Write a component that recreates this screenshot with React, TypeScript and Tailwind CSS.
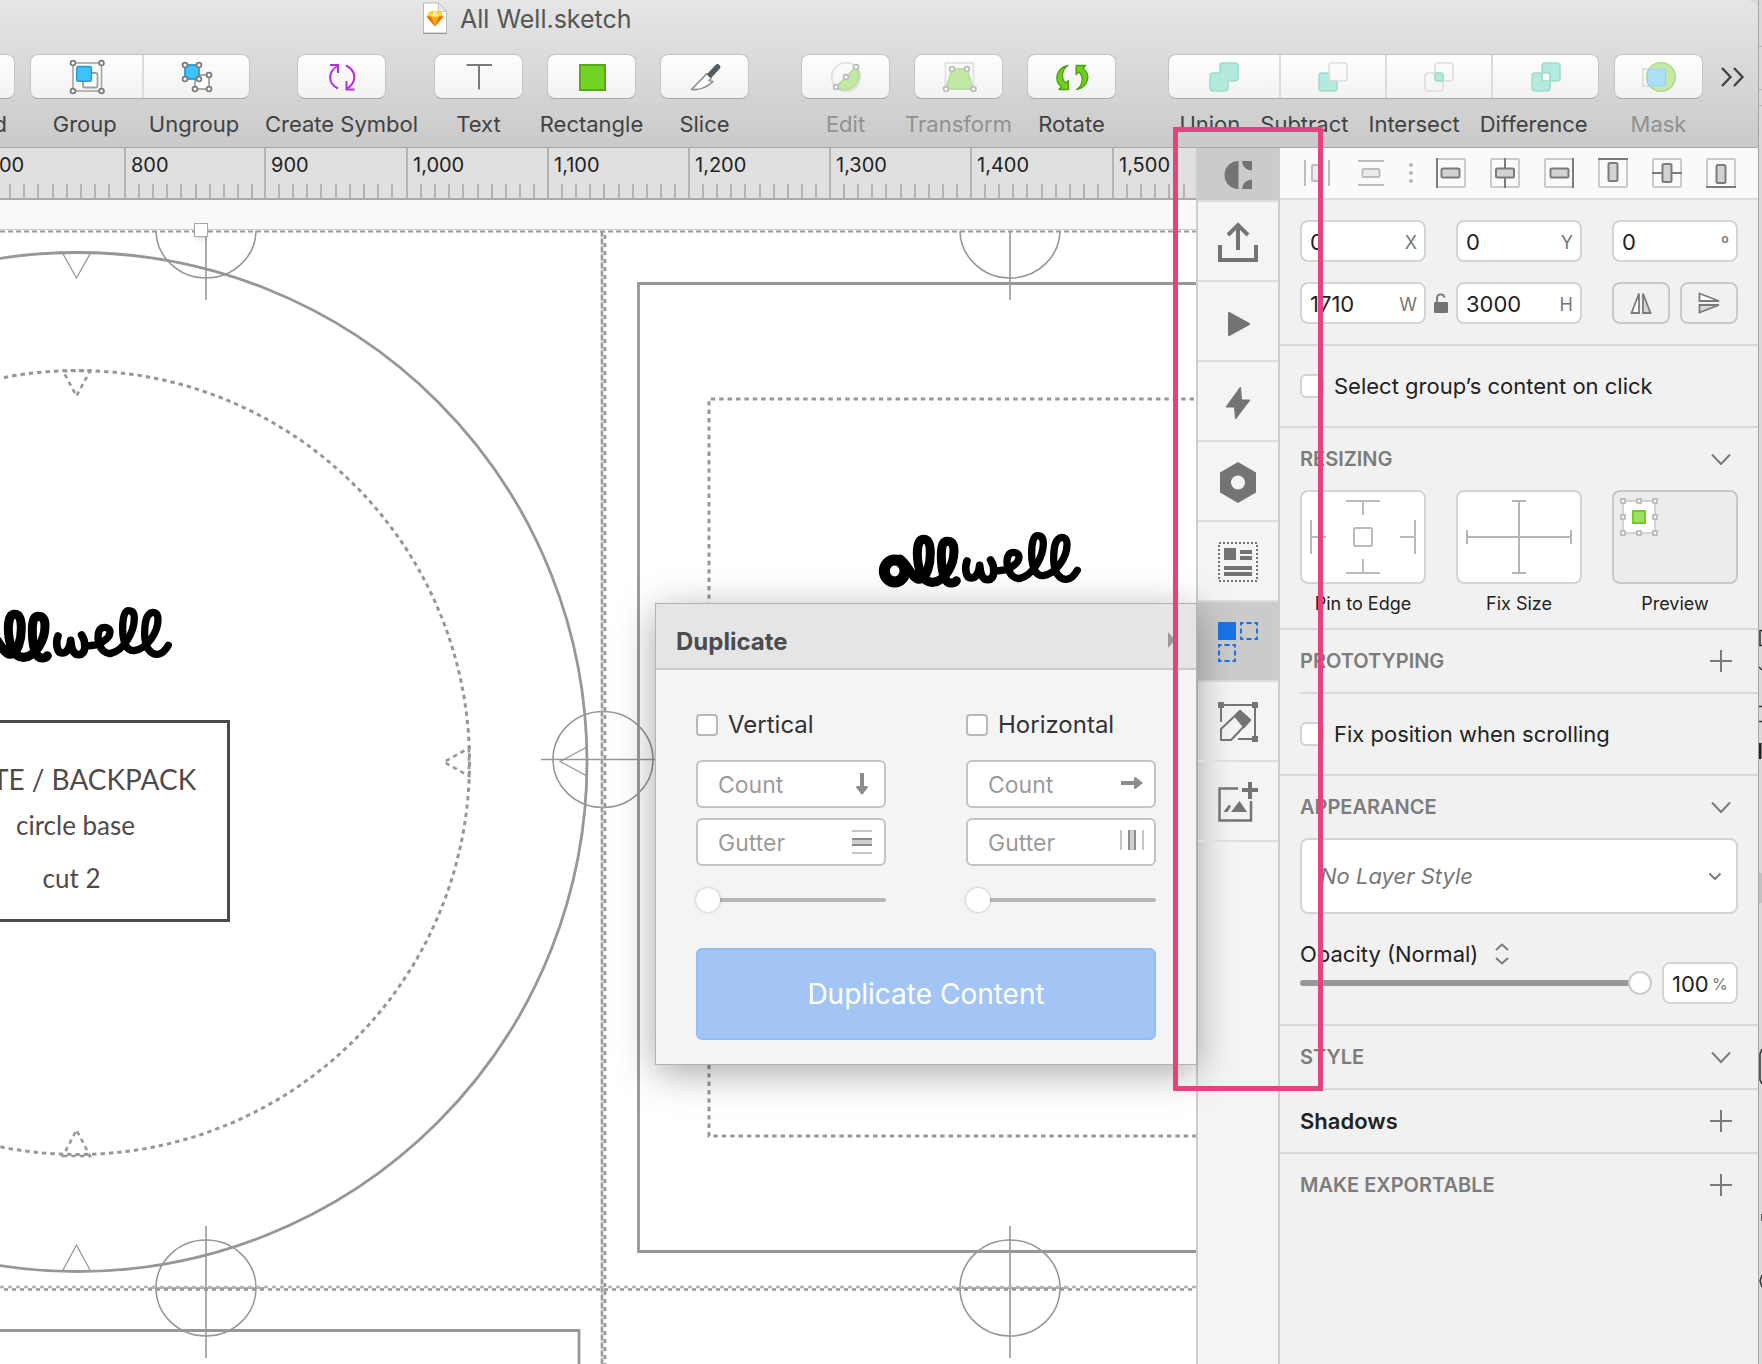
import type { ReactNode } from "react";

const inputBox =
  "flex h-[42px] items-center rounded-lg border-2 border-[#d4d4d4] bg-white pt-0.5 pr-[7px] pl-2";

function Art({ box, w = 40, h = 40, children }: { box: string; w?: number; h?: number; children: ReactNode }) {
  return (
    <svg viewBox={box} width={w} height={h} fill="none" aria-hidden="true" className="shrink-0">
      {children}
    </svg>
  );
}

function Nodes({ at, stroke = "#7c7c7c" }: { at: number[][]; stroke?: string }) {
  return (
    <>
      {at.map(([x, y]) => (
        <circle key={`${x}-${y}`} cx={x} cy={y} r="2.4" fill="#fff" stroke={stroke} strokeWidth="1.8" />
      ))}
    </>
  );
}

/* ---------- toolbar ---------- */

const toolFace =
  "flex h-[45px] items-center justify-center rounded-lg border border-[#c4c4c4] border-b-[#a9a9a9] bg-linear-to-b from-[#fefefe] to-[#f2f2f2]";

function Tool({ label, muted = false, children }: { label: string; muted?: boolean; children: ReactNode }) {
  return (
    <button type="button" className="flex w-[89px] shrink-0 flex-col items-center">
      <span className={`w-full ${toolFace}`}>{children}</span>
      <span className={`mt-[13px] text-[22px] leading-6 whitespace-nowrap ${muted ? "text-[#919191]" : "text-[#424242]"}`}>
        {label}
      </span>
    </button>
  );
}

function Segments({ items, labelClass }: { items: { label: string; width: string; icon: ReactNode }[]; labelClass: string }) {
  return (
    <div className="flex shrink-0 flex-col">
      <div className={toolFace}>
        {items.map((it, i) => (
          <button
            key={it.label}
            type="button"
            aria-label={it.label}
            className={`flex h-full items-center justify-center ${it.width} ${i > 0 ? "border-l-2 border-[#dcdcdc]" : ""}`}
          >
            {it.icon}
          </button>
        ))}
      </div>
      <div className={`mt-[13px] flex justify-center text-[22px] leading-6 whitespace-nowrap text-[#424242] ${labelClass}`}>
        {items.map((it) => (
          <span key={it.label}>{it.label}</span>
        ))}
      </div>
    </div>
  );
}

const mint = "#b4eade";
const mintEdge = "#9fdccd";

function Toolbar() {
  return (
    <div className="flex text-[#424242]">
      <div className="-ml-[97px] flex w-28 shrink-0 flex-col">
        <button type="button" aria-label="Forward" className={toolFace} />
        <span className="mt-[13px] pr-2 text-right text-[22px] leading-6">Forward</span>
      </div>

      <div className="ml-[15px] flex">
        <Segments
          labelClass="gap-8 pl-3"
          items={[
            {
              label: "Group",
              width: "w-[111px]",
              icon: (
                <Art box="66 57 40 40">
                  <rect x="72" y="63" width="28.5" height="28" stroke="#a5a5a5" strokeWidth="1.6" />
                  <rect x="82" y="73" width="14.5" height="14.5" rx="2" fill="#fff" stroke="#a0a0a0" strokeWidth="1.8" />
                  <rect x="75.8" y="66.6" width="14.6" height="14.6" rx="1.5" fill="#3fc3fd" stroke="#2c9ccc" strokeWidth="1.6" />
                  <Nodes at={[[72, 63], [100.5, 63], [72, 91], [100.5, 91]]} />
                </Art>
              ),
            },
            {
              label: "Ungroup",
              width: "w-[107px]",
              icon: (
                <Art box="176 57 40 40">
                  <rect x="194" y="75" width="14" height="14" fill="#fff" stroke="#a0a0a0" strokeWidth="1.8" />
                  <rect x="184" y="65" width="14" height="14" fill="#3fc3fd" stroke="#2c9ccc" strokeWidth="1.8" />
                  <Nodes at={[[184, 65], [198, 65], [184, 79], [198, 79], [208, 75], [194, 89], [208, 89]]} />
                </Art>
              ),
            },
          ]}
        />
      </div>

      <div className="ml-[47px] flex">
        <Tool label="Create Symbol">
          <Art box="322 56 40 40">
            <g stroke="#b52fdc" strokeWidth="2">
              <path d="M338 87.500C327.500 82 327.500 71 338 64.500" />
              <path d="M330 64h8v8" />
              <path d="M346 64.500C356.500 70 357.500 81 346.500 88" />
              <path d="M354.500 88.500H346.500V80" />
            </g>
          </Art>
        </Tool>
      </div>

      <div className="ml-12 flex gap-6">
        <Tool label="Text">
          <Art box="459 56 40 40">
            <path d="M466.500 64H492M479 64V88.500" stroke="#7b7b7b" strokeWidth="2" />
          </Art>
        </Tool>
        <Tool label="Rectangle">
          <Art box="572 56 40 40">
            <rect x="580" y="64" width="25" height="25" fill="#73d325" stroke="#57a91a" strokeWidth="2" />
          </Art>
        </Tool>
        <Tool label="Slice">
          <Art box="685 56 40 40">
            <path d="M691.500 88.500L707 72.500 711.500 77 709 79.500 713 80.500C706 87 700 89.500 691.500 88.500Z" fill="#fff" stroke="#8d8d8d" strokeWidth="1.600" strokeLinejoin="round" />
            <path d="M717.500 66L710.500 73.500" stroke="#535c61" strokeWidth="5.500" strokeLinecap="round" />
          </Art>
        </Tool>
      </div>

      <div className="ml-[52px] flex gap-6">
        <Tool label="Edit" muted>
          <Art box="826 56 40 40">
            <circle cx="846" cy="76" r="14.300" stroke="#dedede" strokeWidth="1.600" />
            <path d="M856 66A14.300 14.300 0 0 1 836 86Z" fill="#c2e9a4" stroke="#b4db98" strokeWidth="1.500" />
            <Nodes at={[[856, 66], [846, 76], [836, 86]]} stroke="#bcbcbc" />
          </Art>
        </Tool>
        <Tool label="Transform" muted>
          <Art box="939 56 40 40">
            <rect x="945.500" y="62" width="28" height="26" stroke="#dedede" strokeWidth="1.600" />
            <path d="M952 68H967L973 88H946Z" fill="#c2e9a4" stroke="#b4db98" strokeWidth="1.600" />
            <Nodes at={[[952, 68], [967, 68], [946, 88], [973.5, 88]]} stroke="#bcbcbc" />
          </Art>
        </Tool>
        <Tool label="Rotate">
          <Art box="1054 56 40 40">
            <g fill="#6fd021" stroke="#48a012" strokeWidth="1.300" strokeLinejoin="round">
              <path d="M1070 64.500C1058 67 1055.500 80 1063.500 85.500L1061 88.500H1070.500V79.500L1067.500 82C1062.500 77 1064 68 1070 64.500Z" />
              <path transform="rotate(180 1074.300 76.500)" d="M1070 64.500C1058 67 1055.500 80 1063.500 85.500L1061 88.500H1070.500V79.500L1067.500 82C1062.500 77 1064 68 1070 64.500Z" />
            </g>
          </Art>
        </Tool>
      </div>

      <div className="ml-[52px] flex">
        <Segments
          labelClass="gap-5"
          items={[
            {
              label: "Union",
              width: "w-[110px]",
              icon: (
                <Art box="0 0 40 40">
                  <path d="M19 6h12a3 3 0 0 1 3 3v12a3 3 0 0 1-3 3h-7v7a3 3 0 0 1-3 3H9a3 3 0 0 1-3-3V19a3 3 0 0 1 3-3h7V9a3 3 0 0 1 3-3Z" fill={mint} stroke={mintEdge} strokeWidth="1.600" />
                </Art>
              ),
            },
            {
              label: "Subtract",
              width: "w-[106px]",
              icon: (
                <Art box="0 0 40 40">
                  <path d="M16 16H9a3 3 0 0 0-3 3v12a3 3 0 0 0 3 3h12a3 3 0 0 0 3-3v-7h-5a3 3 0 0 1-3-3Z" fill={mint} stroke={mintEdge} strokeWidth="1.600" />
                  <rect x="16" y="6" width="18" height="18" rx="3" stroke="#dedede" strokeWidth="1.600" />
                </Art>
              ),
            },
            {
              label: "Intersect",
              width: "w-[106px]",
              icon: (
                <Art box="0 0 40 40">
                  <rect x="16" y="6" width="18" height="18" rx="3" stroke="#dedede" strokeWidth="1.600" />
                  <rect x="6" y="16" width="18" height="18" rx="3" stroke="#dedede" strokeWidth="1.600" />
                  <rect x="16" y="16" width="8" height="8" rx="2" fill={mint} stroke={mintEdge} strokeWidth="1.600" />
                </Art>
              ),
            },
            {
              label: "Difference",
              width: "w-[107px]",
              icon: (
                <Art box="0 0 40 40">
                  <path d="M19 6h12a3 3 0 0 1 3 3v12a3 3 0 0 1-3 3h-7v7a3 3 0 0 1-3 3H9a3 3 0 0 1-3-3V19a3 3 0 0 1 3-3h7V9a3 3 0 0 1 3-3Z" fill={mint} stroke={mintEdge} strokeWidth="1.600" />
                  <rect x="16" y="16" width="8" height="8" rx="2" fill="#fff" stroke={mintEdge} strokeWidth="1.600" />
                </Art>
              ),
            },
          ]}
        />
      </div>

      <div className="ml-[15px] flex">
        <Tool label="Mask" muted>
          <Art box="1640 56 40 40">
            <circle cx="1662" cy="76" r="14.300" fill="#c5e8a2" stroke="#b5da8c" strokeWidth="1.600" />
            <rect x="1644" y="68" width="22" height="17" stroke="#dcdcdc" strokeWidth="1.600" />
            <path d="M1650 68H1666.500V85H1650C1647.500 80 1647.500 73 1650 68Z" fill="#a9e0f8" stroke="#9dcfe0" strokeWidth="1.200" />
          </Art>
        </Tool>
      </div>

      <button type="button" aria-label="More tools" className="ml-3 flex h-[45px] shrink-0 items-center">
        <Art box="0 0 34 24" w={34} h={24}>
          <path d="M7 3l8.500 9L7 21M19 3l8.500 9L19 21" stroke="#444" strokeWidth="2.400" />
        </Art>
      </button>
    </div>
  );
}

function Header() {
  return (
    <header className="overflow-hidden rounded-tr-xl border-b border-[#a6a6a6] bg-linear-to-b from-[#e6e6e6] to-[#cacaca] pb-[11px]">
      <div className="flex h-[54px] items-start gap-3 pt-0.5 pl-[422px]">
        <Art box="0 0 26 33" w={26} h={33}>
          <path d="M1.500 1H16.500L24.500 9.500V31H1.500Z" fill="#fefefe" stroke="#b9b9b9" />
          <path d="M16.500 1V9.500H24.500Z" fill="#e9e9e9" stroke="#c6c6c6" />
          <path d="M1 31.500H25" stroke="#9a9a9a" />
          <path d="M8 9.500L13 9 18 9.500 21.500 14.500 13 24.500 4.500 14.500Z" fill="#fdad00" />
          <path d="M13 9L18 9.500 21.500 14.500H4.500L8 9.500Z" fill="#fdd231" />
          <path d="M13 9L17 14.500H9Z" fill="#feeeb7" />
          <path d="M4.500 14.500H9L13 24.500ZM21.500 14.500H17L13 24.500Z" fill="#ea6c00" />
        </Art>
        <h1 className="text-[25px] leading-[34px] text-[#555]">All Well.sketch</h1>
      </div>
      <Toolbar />
    </header>
  );
}

/* ---------- canvas ---------- */

const majors = [-18, 125, 265, 407, 548, 689, 830, 971, 1113];
const captions = ["700", "800", "900", "1,000", "1,100", "1,200", "1,300", "1,400", "1,500"];

function Ruler() {
  return (
    <div className="relative h-[52px] shrink-0 overflow-hidden border-b-2 border-[#aaa] bg-[#e0e0e0]">
      <svg className="absolute inset-0 h-full w-full" aria-hidden="true">
        {majors.map((x) => (
          <g key={x} stroke="#b3b3b3" strokeWidth="2">
            <path d={`M${x} 0V50`} />
            {[1, 2, 3, 4, 5, 6, 7, 8, 9].map((n) => (
              <path key={n} d={`M${Math.round(x + n * 14.1)} 36V50`} />
            ))}
          </g>
        ))}
      </svg>
      {majors.map((x, i) => (
        <span key={x} className="absolute top-[5px] text-xl leading-6 text-[#222]" style={{ left: x + 6 }}>
          {captions[i]}
        </span>
      ))}
    </div>
  );
}

function Wordmark({ x, y }: { x: number; y: number }) {
  return (
    <g transform={`translate(${x} ${y}) scale(.3333)`} stroke="#000" fill="none" strokeLinecap="round" strokeLinejoin="round">
      <ellipse cx="164" cy="183" rx="31" ry="33" strokeWidth="33" />
      <path strokeWidth="27" d="M180 147C206 165 214 205 238 208C262 205 271 160 271 130C271 100 264 88 251 88C238 88 232 105 232 130C232 170 245 220 280 217C315 213 342 165 342 122C342 102 334 94 321 94C308 94 304 110 304 135C304 180 312 221 335 219C343 218 347 215 349 212" />
      <path strokeWidth="23" d="M381 153C374 172 376 205 395 204C412 203 418 180 419 166C421 190 428 210 444 209C466 207 466 172 452 150" />
      <path strokeWidth="22" d="M462 182C500 186 537 162 537 142C537 128 522 125 512 129C499 136 500 160 503 172C508 195 525 208 540 205C580 195 610 140 610 100C610 82 602 77 592 77C578 79 575 105 575 130C575 170 585 198 610 197C650 190 681 140 681 105C682 90 676 82 666 82C646 84 641 110 641 150C642 190 660 209 680 208C698 206 706 192 712 181" />
    </g>
  );
}

function Registration({ x, y, top = 66, bottom = 70 }: { x: number; y: number; top?: number; bottom?: number }) {
  return (
    <g stroke="#979797" strokeWidth="1.600">
      <ellipse cx={x} cy={y} rx="50" ry="48" />
      <path d={`M${x} ${y - top}V${y + bottom}`} />
    </g>
  );
}

function Canvas() {
  return (
    <div className="relative min-h-0 flex-1 overflow-hidden bg-white">
      <div className="h-[30px] border-b border-[#c9c9c9] bg-[#f9f9f9]" />
      <svg className="absolute inset-0 h-full w-full" fill="none" aria-label="Bag pattern artboards">
        <defs>
          <clipPath id="board">
            <rect x="0" y="231" width="3000" height="3000" />
          </clipPath>
        </defs>
        <g transform="translate(0 -200)">
          <g clipPath="url(#board)">
            <Registration x={206} y={230} />
            <Registration x={1010} y={230} />
          </g>
          <Registration x={206} y={1288} top={62} />
          <Registration x={1010} y={1288} top={62} />
          <g stroke="#979797" strokeWidth="1.600">
            <path d="M149 1288H264M953 1288H1069" />
            <ellipse cx="603" cy="759.500" rx="50" ry="48" />
            <path d="M541 759.500H700" />
          </g>

          <g stroke="#979797" strokeWidth="2.800">
            <circle cx="77.500" cy="762" r="509.500" />
            <path d="M3000 283.500H638.500V1251.500H3000" />
            <path d="M-10 1330.500H579V1500" />
            <g strokeDasharray="4.400 4" strokeWidth="3">
              <circle cx="77.500" cy="762.500" r="392" />
              <path d="M3000 399H709V1136H3000" />
              <path strokeWidth="2.600" d="M63 371H90L76.500 396ZM63 1156H90L76.500 1130ZM469 748V776L444 762Z" />
            </g>
          </g>
          <path stroke="#979797" strokeWidth="1.300" d="M63 254L76.500 278 90 254M63 1270L76.500 1245 90 1270M587 747L560 761.500 587 776" />

          <g strokeWidth="2.600">
            <path stroke="#999" strokeDasharray="5 3" strokeWidth="2.200" d="M0 231.500H3000" />
            <path stroke="#d0d0d0" d="M602 231V3000" />
            <path stroke="#9c9c9c" strokeDasharray="5 3" d="M602 231V3000" />
            <path stroke="#959595" strokeDasharray="4 4" strokeDashoffset="4" d="M605 231V3000" />
            <path stroke="#b5b5b5" strokeDasharray="4 4" d="M0 1287H3000" />
            <path stroke="#959595" strokeDasharray="4 4" strokeDashoffset="4" d="M0 1289.500H3000" />
          </g>

          <Wordmark x={840} y={510} />
          <Wordmark x={-69} y={585} />
        </g>
      </svg>
      <div className="absolute top-[23px] left-[194px] size-3.5 border border-[#a6a6a6] bg-white shadow-md" />
      <div className="absolute top-[520px] -left-[79px] flex h-[202px] w-[309px] flex-col items-center border-[3px] border-[#4f4a4a] pt-[38px] text-[26px] leading-9 whitespace-nowrap text-[#524a4a] [font-family:Lato,sans-serif]">
        <p className="text-[28px]">TOTE / BACKPACK</p>
        <p className="mt-2.5">circle base</p>
        <p className="mt-[17px] pr-2">cut 2</p>
      </div>
    </div>
  );
}

/* ---------- duplicate popover ---------- */

const rangeBase =
  "block w-full appearance-none bg-transparent [&::-webkit-slider-thumb]:appearance-none [&::-webkit-slider-thumb]:size-6 [&::-webkit-slider-thumb]:rounded-full [&::-webkit-slider-thumb]:bg-white";

function Axis({ name, count, gutter }: { name: string; count: ReactNode; gutter: ReactNode }) {
  const field = "flex h-12 items-center rounded-md border-2 border-[#c4c4c4] bg-white pr-2.5 pl-5";
  const text = "w-full min-w-0 pt-0.5 text-[23px] placeholder:text-[#9b9b9b]";
  return (
    <fieldset className="w-[190px]">
      <label className="flex h-7 items-center gap-2.5 text-[24px] text-[#333]">
        <input type="checkbox" className="size-[22px] appearance-none rounded border-2 border-[#b8b8b8] bg-white" />
        {name}
      </label>
      <div className={`mt-[21px] ${field}`}>
        <input aria-label={`${name} count`} placeholder="Count" className={text} />
        {count}
      </div>
      <div className={`mt-2.5 ${field}`}>
        <input aria-label={`${name} gutter`} placeholder="Gutter" className={text} />
        {gutter}
      </div>
      <input
        type="range"
        aria-label={`${name} gutter size`}
        defaultValue={0}
        className={`mt-[22px] h-6 ${rangeBase} [&::-webkit-slider-runnable-track]:h-1 [&::-webkit-slider-runnable-track]:rounded-full [&::-webkit-slider-runnable-track]:bg-[#b6b6b6] [&::-webkit-slider-thumb]:-mt-2.5 [&::-webkit-slider-thumb]:shadow-[0_0_3px_rgba(0,0,0,0.3)]`}
      />
    </fieldset>
  );
}

function DuplicatePopover() {
  return (
    <section className="absolute top-px right-full mr-px w-[542px] border border-[#b2b2b2] bg-[#f4f4f4] text-left shadow-[0_8px_36px_rgba(0,0,0,0.34)]">
      <header className="flex h-[66px] items-center justify-between border-b-2 border-[#c9c9c9] bg-[#e5e5e5] px-5">
        <h2 className="pt-3 text-[24px] font-bold text-[#4c4c4c]">Duplicate</h2>
        <Art box="0 0 8 24" w={8} h={24}>
          <path d="M0 8L7 16 0 24Z" fill="#999" />
        </Art>
      </header>
      <div className="px-10 pt-[41px] pb-6">
        <div className="flex justify-between">
          <Axis
            name="Vertical"
            count={
              <Art box="0 0 24 24" w={24} h={24}>
                <path d="M12 1V15" stroke="#8c8c8c" strokeWidth="4" />
                <path d="M6 15.500L12 23 18 15.500Q18 14 16.500 14H7.500Q6 14 6 15.500Z" fill="#8c8c8c" />
              </Art>
            }
            gutter={
              <Art box="0 0 24 24" w={24} h={24}>
                <path d="M2 1H22M2 23H22" stroke="#c6c6c6" strokeWidth="2" />
                <path d="M2 12H22" stroke="#d0d0d0" strokeWidth="5" />
                <path d="M2 9H22M2 15H22" stroke="#8c8c8c" strokeWidth="2" />
              </Art>
            }
          />
          <Axis
            name="Horizontal"
            count={
              <Art box="0 0 24 24" w={24} h={24}>
                <path d="M1 11H15" stroke="#8c8c8c" strokeWidth="4" />
                <path d="M15.500 5L23 11 15.500 17Q14 17 14 15.500V6.500Q14 5 15.500 5Z" fill="#8c8c8c" />
              </Art>
            }
            gutter={
              <Art box="0 0 24 24" w={24} h={24}>
                <path d="M1 0V20M23 0V20" stroke="#c6c6c6" strokeWidth="2" />
                <path d="M12 0V20" stroke="#d0d0d0" strokeWidth="5" />
                <path d="M9 0V20M15 0V20" stroke="#8c8c8c" strokeWidth="2" />
              </Art>
            }
          />
        </div>
        <button type="button" className="mt-9 h-[92px] w-full rounded-md border-2 border-[#94bdf3] bg-[#a3c5f6] text-[28px] text-white">
          Duplicate Content
        </button>
      </div>
    </section>
  );
}

/* ---------- plugin rail ---------- */

const ink = "#737573";

const railIcons: { label: string; icon: ReactNode }[] = [
  {
    label: "Export",
    icon: (
      <g stroke={ink} strokeWidth="4">
        <path d="M1220 245V260H1256V245" />
        <path d="M1238 225V250M1228 235L1238 225 1248 235" />
      </g>
    ),
  },
  { label: "Preview", icon: <path d="M1229 313V335L1249 324Z" fill={ink} stroke={ink} strokeWidth="2" strokeLinejoin="round" /> },
  { label: "Quick actions", icon: <path d="M1240.500 387L1226 407H1234.500L1235.500 419 1250 400H1241.500Z" fill={ink} stroke={ink} strokeLinejoin="round" /> },
  { label: "Settings", icon: <path fillRule="evenodd" d="M1238 462L1256 472.500V492.500L1238 503 1220 492.500V472.500ZM1238 475.500A7 7 0 1 0 1238 489.500A7 7 0 1 0 1238 475.500Z" fill={ink} /> },
  {
    label: "Content",
    icon: (
      <g fill={ink}>
        <rect x="1219" y="543" width="38" height="38" fill="none" stroke={ink} strokeWidth="2" strokeDasharray="2 2" />
        <path d="M1224 548h12v12h-12ZM1240 550h12v4h-12ZM1240 556h12v4h-12ZM1224 566h28v4h-28ZM1224 572h28v4h-28Z" />
      </g>
    ),
  },
  {
    label: "Duplicate",
    icon: (
      <g stroke="#1a73e8" strokeWidth="2">
        <rect x="1218" y="622" width="18" height="18" fill="#1a73e8" stroke="none" />
        <rect x="1241" y="623" width="16" height="16" strokeDasharray="5 3" strokeDashoffset="2.500" />
        <rect x="1219" y="645" width="16" height="16" strokeDasharray="5 3" strokeDashoffset="2.500" />
      </g>
    ),
  },
  {
    label: "Edit vectors",
    icon: (
      <g stroke={ink} strokeWidth="2">
        <path d="M1218 702h6v6h-6ZM1252 702h6v6h-6ZM1252 736h6v6h-6Z" fill={ink} stroke="none" />
        <path d="M1221 722V705H1255V739H1238" />
        <path d="M1221 740V729L1240 711 1250 720 1231 740Z" strokeLinejoin="round" />
        <path d="M1235 716L1240 711 1250 720 1244 727Z" fill={ink} />
      </g>
    ),
  },
  {
    label: "Insert image",
    icon: (
      <g stroke={ink} strokeWidth="2.500">
        <path d="M1238 788.500H1219.500V820.500H1251V801" />
        <path d="M1250 782V799M1242 790H1258" strokeWidth="4" />
        <path d="M1231 812L1239.500 801 1247 812ZM1223.500 812L1229 804.500 1231 806.500 1227.500 812Z" fill={ink} stroke="none" />
      </g>
    ),
  },
];

function Rail() {
  return (
    <aside className="relative z-10 w-[84px] shrink-0 border-x-2 border-[#cdcdcd] bg-[#f4f4f4]">
      <button type="button" aria-label="Toolkit" className="flex h-[54px] w-full items-center justify-center border-b-2 border-[#dedede] bg-[#cbcbcb]">
        <Art box="1218 154 40 40">
          <path d="M1238.500 161V189A14 14 0 0 1 1238.500 161ZM1242 161H1252V170.500A10 9.500 0 0 1 1242 161ZM1242 189H1252V179.500A10 9.500 0 0 0 1242 189Z" fill={ink} />
        </Art>
      </button>
      {railIcons.map(({ label, icon }, i) => (
        <div key={label} className={`relative h-20 border-b-2 border-[#dedede] ${label === "Duplicate" ? "bg-[#cbcbcb]" : ""}`}>
          <button type="button" aria-label={label} className="flex h-full w-full items-center justify-center">
            <svg viewBox={`1198 ${202 + i * 80} 80 78`} width="80" height="78" fill="none" aria-hidden="true">
              {icon}
            </svg>
          </button>
          {label === "Duplicate" && <DuplicatePopover />}
        </div>
      ))}
      <div className="pointer-events-none absolute -top-[21px] -left-[25px] z-20 h-[964px] w-[150px] border-[5px] border-[#e6427f]" />
    </aside>
  );
}

/* ---------- inspector ---------- */

function AlignBar() {
  const dark = "#7b7b7b";
  const box = <rect x="1" y="1" width="28" height="28" rx="1" stroke="#cbcbcb" strokeWidth="2" />;
  const wide = (x: number) => <rect x={x} y="10.500" width="18" height="9" rx="1.500" fill="#d2d2d2" stroke={dark} strokeWidth="2" />;
  const tall = (y: number) => <rect x="10.500" y={y} width="9" height="18" rx="1.500" fill="#d2d2d2" stroke={dark} strokeWidth="2" />;
  const aligns: { label: string; icon: ReactNode }[] = [
    { label: "Align left", icon: <>{box}<path d="M1 0V30" stroke={dark} strokeWidth="2" />{wide(5.5)}</> },
    { label: "Align center", icon: <>{box}<path d="M15 0V30" stroke={dark} strokeWidth="2" />{wide(6)}</> },
    { label: "Align right", icon: <>{box}<path d="M29 0V30" stroke={dark} strokeWidth="2" />{wide(6.5)}</> },
    { label: "Align top", icon: <>{box}<path d="M0 1H30" stroke={dark} strokeWidth="2" />{tall(5)}</> },
    { label: "Align middle", icon: <>{box}<path d="M0 15H30" stroke={dark} strokeWidth="2" />{tall(6)}</> },
    { label: "Align bottom", icon: <>{box}<path d="M0 29H30" stroke={dark} strokeWidth="2" />{tall(7)}</> },
  ];
  return (
    <div className="flex h-[52px] items-center gap-6 border-b-2 border-[#dcdcdc] bg-[#fafafa] pl-[22px]">
      <button type="button" aria-label="Distribute horizontally">
        <Art box="0 0 30 30" w={30} h={30}>
          <path d="M3 2V28M27 2V28" stroke="#bdbdbd" strokeWidth="2" />
          <rect x="10" y="7" width="9" height="16" rx="1.500" fill="#ececec" stroke="#bdbdbd" strokeWidth="2" />
        </Art>
      </button>
      <button type="button" aria-label="Distribute vertically">
        <Art box="0 0 30 30" w={30} h={30}>
          <path d="M2 3H28M2 27H28" stroke="#bdbdbd" strokeWidth="2" />
          <rect x="6.500" y="11" width="17" height="8" rx="1.500" fill="#ececec" stroke="#bdbdbd" strokeWidth="2" />
        </Art>
      </button>
      <span className="-mx-px flex flex-col gap-1">
        <i className="size-1 rounded-full bg-[#b8b8b8]" />
        <i className="size-1 rounded-full bg-[#b8b8b8]" />
        <i className="size-1 rounded-full bg-[#b8b8b8]" />
      </span>
      {aligns.map((a) => (
        <button key={a.label} type="button" aria-label={a.label}>
          <Art box="0 0 30 30" w={30} h={30}>{a.icon}</Art>
        </button>
      ))}
    </div>
  );
}

function NumberField({ unit, value, label }: { unit: string; value: string; label: string }) {
  return (
    <label className={`w-[126px] ${inputBox}`}>
      <input aria-label={label} defaultValue={value} className="w-full min-w-0 text-[22px] text-[#222]" />
      <span className="text-[18px] text-[#777]">{unit}</span>
    </label>
  );
}

const Chevron = () => (
  <Art box="0 0 34 20" w={34} h={20}>
    <path d="M8 5.500L17 15 26 5.500" stroke="#7b7b7b" strokeWidth="2" />
  </Art>
);

const Plus = () => (
  <Art box="0 0 34 24" w={34} h={24}>
    <path d="M6 12H28M17 1V23" stroke="#7b7b7b" strokeWidth="2" />
  </Art>
);

function SectionTitle({ children, action, strong = false }: { children: string; action: ReactNode; strong?: boolean }) {
  return (
    <div className="flex h-[62px] items-center justify-between">
      <h3 className={strong ? "text-[22px] font-semibold text-[#222]" : "text-xl font-semibold text-[#7c7c7c]"}>{children}</h3>
      <button type="button" aria-label={`${children} options`}>{action}</button>
    </div>
  );
}

function CheckRow({ children }: { children: string }) {
  return (
    <label className="flex h-[82px] items-center gap-2.5 border-b-2 border-[#dadada] px-5 text-[22px] text-[#222]">
      <input type="checkbox" className="size-6 appearance-none rounded-md border-2 border-[#d4d4d4] bg-white" />
      {children}
    </label>
  );
}

function Inspector() {
  const section = "border-b-2 border-[#dadada] px-5";
  const tile = "flex h-[94px] w-[126px] rounded-lg border-2";
  const flip = "flex h-[42px] w-[58px] items-center justify-center rounded-lg border-2 border-[#c9c9c9]";
  return (
    <aside className="w-[478px] shrink-0 bg-[#f1f1f1]">
      <AlignBar />

      <div className={`flex flex-col gap-5 py-5 ${section}`}>
        <div className="flex justify-between">
          <NumberField label="X position" unit="X" value="0" />
          <NumberField label="Y position" unit="Y" value="0" />
          <NumberField label="Rotation" unit="º" value="0" />
        </div>
        <div className="flex items-center">
          <NumberField label="Width" unit="W" value="1710" />
          <button type="button" aria-label="Lock proportions" className="flex w-[30px] justify-center">
            <Art box="0 0 16 22" w={16} h={22}>
              <rect x="1" y="10" width="14" height="11" rx="1" fill="#737373" />
              <path d="M4 10V5.500A3.800 3.800 0 0 1 11.500 5.500" stroke="#737373" strokeWidth="1.800" />
            </Art>
          </button>
          <NumberField label="Height" unit="H" value="3000" />
          <div className="ml-auto flex gap-2.5">
            <button type="button" aria-label="Flip horizontally" className={flip}>
              <Art box="0 0 24 24" w={24} h={24}>
                <path d="M10 2.500V22H2.500Z" fill="#fff" stroke="#7b7b7b" strokeWidth="1.800" />
                <path d="M14 2.500V22H21.500Z" fill="#d6d6d6" stroke="#7b7b7b" strokeWidth="1.800" />
              </Art>
            </button>
            <button type="button" aria-label="Flip vertically" className={flip}>
              <Art box="0 0 24 24" w={24} h={24}>
                <path d="M2.500 10H22L2.500 2.500Z" fill="#fff" stroke="#7b7b7b" strokeWidth="1.800" />
                <path d="M2.500 14H22L2.500 21.500Z" fill="#d6d6d6" stroke="#7b7b7b" strokeWidth="1.800" />
              </Art>
            </button>
          </div>
        </div>
      </div>

      <CheckRow>Select group’s content on click</CheckRow>

      <div className={section}>
        <SectionTitle action={<Chevron />}>RESIZING</SectionTitle>
        <div className="flex justify-between pb-3.5 text-center text-[18px] leading-5 text-[#222]">
          <figure>
            <div className={`${tile} border-[#d4d4d4] bg-white`}>
              <Art box="0 0 122 90" w={122} h={90}>
                <g stroke="#bababa" strokeWidth="2">
                  <path d="M44 9H78M61 9V23M44 81H78M61 81V67M9 28V62M9 45H24M113 28V62M113 45H98" />
                  <rect x="52" y="36" width="18" height="18" rx="1.500" />
                </g>
              </Art>
            </div>
            <figcaption className="mt-2.5">Pin to Edge</figcaption>
          </figure>
          <figure>
            <div className={`${tile} border-[#d4d4d4] bg-white`}>
              <Art box="0 0 122 90" w={122} h={90}>
                <path d="M9 45H113M61 9V81M9 38V52M113 38V52M54 9H68M54 81H68" stroke="#b5b5b5" strokeWidth="2" />
              </Art>
            </div>
            <figcaption className="mt-2.5">Fix Size</figcaption>
          </figure>
          <figure>
            <div className={`${tile} border-[#c8c8c8] bg-[#ececec]`}>
              <Art box="0 0 122 90" w={122} h={90}>
                <rect x="9" y="9" width="32" height="32" fill="#fff" stroke="#d2d2d2" strokeWidth="2" />
                <rect x="19" y="19" width="12" height="12" fill="#9ade66" stroke="#6fcf20" strokeWidth="2" />
                <g fill="#fff" stroke="#b5b5b5" strokeWidth="1.600">
                  {[[9, 9], [25, 9], [41, 9], [9, 25], [41, 25], [9, 41], [25, 41], [41, 41]].map(([x, y]) => (
                    <rect key={`${x}-${y}`} x={x - 2} y={y - 2} width="4" height="4" />
                  ))}
                </g>
              </Art>
            </div>
            <figcaption className="mt-2.5">Preview</figcaption>
          </figure>
        </div>
      </div>

      <div className="ml-5 border-b-2 border-[#dadada] pr-5">
        <SectionTitle action={<Plus />}>PROTOTYPING</SectionTitle>
      </div>
      <CheckRow>Fix position when scrolling</CheckRow>

      <div className={`pb-5 ${section}`}>
        <SectionTitle action={<Chevron />}>APPEARANCE</SectionTitle>
        <div className="relative">
          <select aria-label="Layer style" className="h-[76px] w-full appearance-none rounded-lg border-2 border-[#d4d4d4] bg-white px-[18px] text-[22px] text-[#777] italic">
            <option>No Layer Style</option>
          </select>
          <span className="pointer-events-none absolute inset-y-0 right-[11px] flex items-center">
            <Art box="0 0 24 16" w={24} h={16}>
              <path d="M6.500 5.500L12 11 17.500 5.500" stroke="#7b7b7b" strokeWidth="2" />
            </Art>
          </span>
        </div>
        <div className="mt-6 flex items-end gap-2.5">
          <div className="flex-1 pb-2">
            <div className="flex h-8 items-center gap-4">
              <select aria-label="Blend mode" className="h-8 appearance-none text-[22px] text-[#222]">
                <option>Opacity (Normal)</option>
              </select>
              <Art box="0 0 14 22" w={14} h={22}>
                <path d="M1 7L7 1.500 13 7M1 15L7 20.500 13 15" stroke="#7b7b7b" strokeWidth="2" />
              </Art>
            </div>
            <input
              type="range"
              aria-label="Opacity"
              defaultValue={100}
              className={`h-[26px] ${rangeBase} [&::-webkit-slider-runnable-track]:h-1.5 [&::-webkit-slider-runnable-track]:rounded-full [&::-webkit-slider-runnable-track]:bg-[#999] [&::-webkit-slider-thumb]:-mt-[9px] [&::-webkit-slider-thumb]:border-2 [&::-webkit-slider-thumb]:border-[#ccc]`}
            />
          </div>
          <label className={`w-[76px] ${inputBox}`}>
            <input aria-label="Opacity percent" defaultValue="100" className="w-10 min-w-0 text-[22px] text-[#222]" />
            <span className="text-base text-[#777]">%</span>
          </label>
        </div>
      </div>

      <div className={section}>
        <SectionTitle action={<Chevron />}>STYLE</SectionTitle>
      </div>
      <div className={section}>
        <SectionTitle strong action={<Plus />}>Shadows</SectionTitle>
      </div>
      <div className="px-5">
        <SectionTitle action={<Plus />}>MAKE EXPORTABLE</SectionTitle>
      </div>
    </aside>
  );
}

/* Sliver of the window that sits behind this one. */
function BackWindow() {
  return (
    <div className="relative w-1 shrink-0 overflow-hidden border-l border-[#a3a3a3] bg-[#dadada]">
      <svg className="absolute inset-0 h-full w-full" fill="none" aria-hidden="true">
        <path d="M0 46.500H4M0 89.500H4M0 105.500H4" stroke="#b5b5b5" />
        <path d="M0 873h4v30H0Z" fill="#c2c2c2" />
        <path d="M3 630.500H1V645.500H3M0 667l3 3M0 706.500H3M0 721.500H3M3 1049L1 1054V1080L3 1084M3 1214V1221M3 1275L1 1281L3 1287" stroke="#333" strokeWidth="1.500" />
        <path d="M0 743H2.500V759H0Z" fill="#222" />
      </svg>
    </div>
  );
}

export default function App() {
  return (
    <div className="flex min-h-screen overflow-hidden bg-[#dadada] font-[Inter,sans-serif]">
      <div className="flex min-w-0 flex-1 flex-col">
        <Header />
        <main className="flex flex-1">
          <div className="flex min-w-0 flex-1 flex-col">
            <Ruler />
            <Canvas />
          </div>
          <Rail />
          <Inspector />
        </main>
      </div>
      <BackWindow />
    </div>
  );
}
